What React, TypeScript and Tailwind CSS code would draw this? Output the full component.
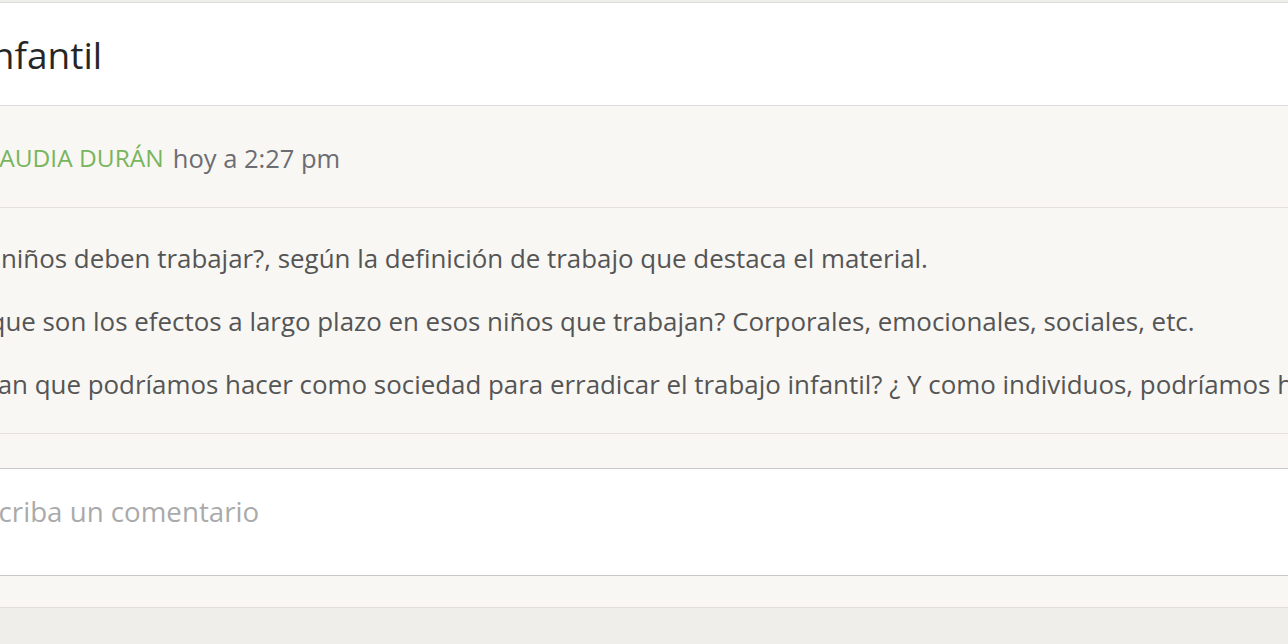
import React from "react";

// Vista de una entrada del foro: título, autor, preguntas y caja de comentario.
export default function App() {
  return (
    <div className="h-[644px] w-full overflow-hidden bg-[#efeeeb] pt-[2px] font-['Open_Sans',sans-serif]">
      <div className="w-[1600px]">
        <header className="flex h-[104px] items-center border-t border-b border-[#dcdcdc] bg-white pt-[1px]">
          <h1 className="-ml-[158px] text-[37px] leading-none text-[#262626]">Trabajo infantil</h1>
        </header>

        <section className="bg-[#f8f7f4]">
          <div className="flex h-[102px] items-center border-b border-[#e4e1dc] pt-[3px] -ml-[29px]">
            <span className="text-[24.5px] text-[#78b55c]">CLAUDIA DURÁN</span>
            <span className="ml-[9px] text-[25.5px] text-[#6c6d72]">hoy a 2:27 pm</span>
          </div>

          <div className="flex flex-col gap-[25px] border-b border-[#e4e1dc] pt-[31px] pb-[30px] -ml-[183px] text-[25.9px] leading-[38px] text-[#555]">
            <p>¿Creen que los niños deben trabajar?, según la definición de trabajo que destaca el material.</p>
            <p>¿Cuáles creen que son los efectos a largo plazo en esos niños que trabajan? Corporales, emocionales, sociales, etc.</p>
            <p>¿Ustedes piensan que podríamos hacer como sociedad para erradicar el trabajo infantil? ¿ Y como individuos, podríamos hacer algo?</p>
          </div>

          <div className="border-b border-[#e2dfda] pt-[34px] pb-[31px]">
            <textarea
              placeholder="Escriba un comentario"
              className="-ml-[30px] block h-[108px] w-[1400px] resize-none border-y border-[#c9c9c9] bg-white pt-[22px] pb-[20px] text-[27.7px] leading-[40px] text-[#555] outline-none placeholder:text-[#aaa]"
            />
          </div>
        </section>
      </div>
    </div>
  );
}
